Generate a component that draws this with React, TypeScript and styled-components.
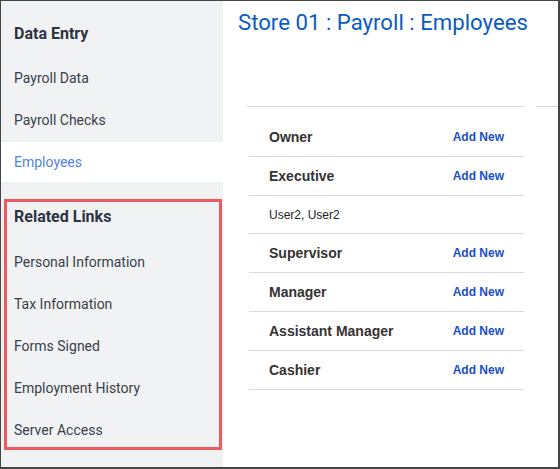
import styled, { createGlobalStyle } from "styled-components";

const GlobalStyle = createGlobalStyle`
    html, body {
        margin: 0;
        padding: 0;
        background: #ffffff;
    }
    * {
        box-sizing: border-box;
    }
`;

const Frame = styled.div`
    display: flex;
    width: 560px;
    height: 469px;
    border-style: solid;
    border-color: #454545;
    border-width: 1px 2px 2px 1px;
    background: #ffffff;
    overflow: hidden;
`;

const Sidebar = styled.aside`
    width: 222px;
    flex-shrink: 0;
    background: #f1f2f4;
    font-family: Roboto, "Liberation Sans", sans-serif;
    display: flex;
    flex-direction: column;
`;

const SectionTitle = styled.h3`
    margin: 0;
    font-size: 16px;
    font-weight: 700;
    line-height: 20px;
    color: #2e3340;
`;

const TopTitle = styled(SectionTitle)`
    padding: 23px 13px 0;
    margin-bottom: 14px;
`;

const NavList = styled.nav`
    display: flex;
    flex-direction: column;
    gap: 2px;
`;

const NavItem = styled.a<{ $active?: boolean }>`
    display: block;
    padding: 10px 13px;
    font-size: 14px;
    line-height: 20px;
    text-decoration: none;
    color: ${(p) => (p.$active ? "#5584e6" : "#3a3f4a")};
    background: ${(p) => (p.$active ? "#ffffff" : "transparent")};
`;

const RelatedBox = styled.div`
    margin: 17px 0 0 3px;
    width: 218px;
    border: 3px solid #ee5b5e;
    padding: 5px 7px 7px;
`;

const RelatedList = styled.div`
    display: flex;
    flex-direction: column;
    gap: 22px;
    margin-top: 25px;
`;

const RelatedItem = styled.a`
    display: block;
    font-size: 14px;
    line-height: 20px;
    color: #3a3f4a;
    text-decoration: none;
`;

const Main = styled.main`
    flex: 1;
    display: flex;
    flex-direction: column;
`;

const PageTitle = styled.h1`
    margin: 0;
    padding: 9px 0 0 15px;
    font-family: Roboto, "Liberation Sans", sans-serif;
    font-size: 22.2px;
    font-weight: 400;
    line-height: 24px;
    color: #0b5cbf;
`;

const HeaderRule = styled.div`
    display: flex;
    gap: 11px;
    margin-top: 72px;
    padding-left: 24px;
`;

const RuleSegment = styled.div<{ $width?: number }>`
    height: 1px;
    background: #d9d9d9;
    flex: ${(p) => (p.$width ? `0 0 ${p.$width}px` : "1")};
`;

const Table = styled.div`
    margin: 11px 0 0 26px;
    width: 275px;
    font-family: "Liberation Sans", Arial, sans-serif;
`;

const Row = styled.div<{ $height?: number }>`
    display: flex;
    align-items: center;
    justify-content: space-between;
    height: ${(p) => p.$height ?? 39}px;
    padding: 0 20px;
    border-bottom: 1px solid #d9d9d9;
`;

const RoleName = styled.span`
    font-size: 14px;
    font-weight: 700;
    color: #333333;
`;

const AddLink = styled.a`
    font-size: 12px;
    font-weight: 700;
    color: #1a4fc6;
    text-decoration: none;
    cursor: pointer;
`;

const Member = styled.span`
    font-size: 12px;
    color: #222222;
`;

const roles = [
    { name: "Owner", members: [] as string[] },
    { name: "Executive", members: ["User2, User2"] },
    { name: "Supervisor", members: [] },
    { name: "Manager", members: [] },
    { name: "Assistant Manager", members: [] },
    { name: "Cashier", members: [] },
];

export default function App() {
    return (
        <>
            <GlobalStyle />
            <Frame>
                <Sidebar>
                    <TopTitle>Data Entry</TopTitle>
                    <NavList>
                        <NavItem>Payroll Data</NavItem>
                        <NavItem>Payroll Checks</NavItem>
                        <NavItem $active>Employees</NavItem>
                    </NavList>
                    <RelatedBox>
                        <SectionTitle>Related Links</SectionTitle>
                        <RelatedList>
                            <RelatedItem>Personal Information</RelatedItem>
                            <RelatedItem>Tax Information</RelatedItem>
                            <RelatedItem>Forms Signed</RelatedItem>
                            <RelatedItem>Employment History</RelatedItem>
                            <RelatedItem>Server Access</RelatedItem>
                        </RelatedList>
                    </RelatedBox>
                </Sidebar>
                <Main>
                    <PageTitle>Store 01 : Payroll : Employees</PageTitle>
                    <HeaderRule>
                        <RuleSegment $width={278} />
                        <RuleSegment />
                    </HeaderRule>
                    <Table>
                        {roles.map((role) => (
                            <div key={role.name}>
                                <Row>
                                    <RoleName>{role.name}</RoleName>
                                    <AddLink>Add New</AddLink>
                                </Row>
                                {role.members.map((m) => (
                                    <Row key={m} $height={38}>
                                        <Member>{m}</Member>
                                    </Row>
                                ))}
                            </div>
                        ))}
                    </Table>
                </Main>
            </Frame>
        </>
    );
}
